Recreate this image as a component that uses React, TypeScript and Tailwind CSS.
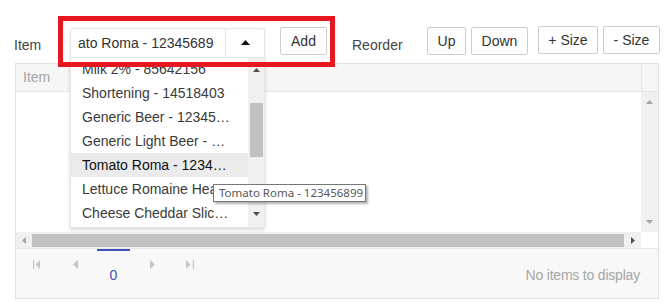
import React from "react";

const Tri = ({ dir, color, w = 8, h = 4 }: { dir: "up" | "down" | "left" | "right"; color: string; w?: number; h?: number }) => {
  let pts = "";
  let vw = w;
  let vh = h;
  if (dir === "up") pts = `0,${h} ${w},${h} ${w / 2},0`;
  if (dir === "down") pts = `0,0 ${w},0 ${w / 2},${h}`;
  if (dir === "left") {
    vw = h;
    vh = w;
    pts = `${h},0 ${h},${w} 0,${w / 2}`;
  }
  if (dir === "right") {
    vw = h;
    vh = w;
    pts = `0,0 0,${w} ${h},${w / 2}`;
  }
  return (
    <svg width={vw} height={vh} viewBox={`0 0 ${vw} ${vh}`} className="block">
      <polygon points={pts} fill={color} />
    </svg>
  );
};

const items = [
  "Milk 2% - 85642156",
  "Shortening - 14518403",
  "Generic Beer - 123456789",
  "Generic Light Beer - 123456788",
  "Tomato Roma - 123456899",
  "Lettuce Romaine Head - 12345678",
  "Cheese Cheddar Slice - 12345678",
];

const Btn = ({ children, className = "" }: { children: React.ReactNode; className?: string }) => (
  <div
    className={
      "h-[28px] flex items-center justify-center border border-[#cdcdcd] rounded-[2px] bg-white text-[14px] text-[#333] " +
      className
    }
  >
    {children}
  </div>
);

export default function App() {
  return (
    <div className="relative w-[667px] h-[307px] overflow-hidden bg-white font-['Liberation_Sans',Arial,sans-serif]">
      {/* toolbar */}
      <div className="flex items-start h-[63px] pt-[27px] pl-[14px]">
        <div className="w-[56px] mt-[8px] leading-[20px] text-[14px] text-[#444]">Item</div>
        <div className="relative w-[195px] h-[31px] mt-[1px] flex border border-[#e6e6e6] rounded-[2px] bg-white shadow-[0_1px_2px_rgba(0,0,0,0.12)]">
          <div className="flex-1 overflow-hidden whitespace-nowrap pl-[7px] leading-[29px] text-[14px] text-[#333]">
            ato Roma - 12345689
          </div>
          <div className="w-[39px] border-l border-[#e6e6e6] flex items-center justify-center pb-[3px]">
            <Tri dir="up" color="#111" w={9} h={5} />
          </div>
        </div>
        <Btn className="ml-[15px] w-[47px]">Add</Btn>
        <div className="ml-[25px] w-[75px] mt-[8px] leading-[20px] text-[14px] text-[#444]">Reorder</div>
        <Btn className="w-[39px]">Up</Btn>
        <Btn className="ml-[5px] w-[57px]">Down</Btn>
        <Btn className="ml-[10px] w-[60px] -mt-[1px]">+ Size</Btn>
        <Btn className="ml-[5px] w-[57px] -mt-[1px]">- Size</Btn>
      </div>

      {/* grid */}
      <div className="ml-[15px] w-[644px] h-[236px] border border-[#e0e0e0] flex flex-col">
        <div className="h-[28px] flex border-b border-[#e6e6e6] bg-[#f6f6f6]">
          <div className="flex-1 pl-[7px] leading-[27px] text-[14px] text-[#a4a4a4]">Item</div>
          <div className="w-[17px] border-l border-[#e6e6e6]" />
        </div>
        <div className="h-[140px] flex">
          <div className="flex-1 bg-white" />
          <div className="w-[17px] bg-[#f0f0f0] flex flex-col items-center justify-between pt-[8px] pb-[8px]">
            <Tri dir="up" color="#a3a3a3" w={7} h={4} />
            <Tri dir="down" color="#a3a3a3" w={7} h={4} />
          </div>
        </div>
        <div className="h-[16px] flex">
          <div className="flex-1 bg-[#f0f0f0] flex items-center">
            <div className="w-[16px] flex justify-center">
              <Tri dir="left" color="#a3a3a3" w={7} h={4} />
            </div>
            <div className="flex-1 h-[13px] bg-[#c1c1c1]" />
            <div className="w-[17px] flex justify-center">
              <Tri dir="right" color="#505050" w={7} h={4} />
            </div>
          </div>
          <div className="w-[17px] bg-white" />
        </div>
        <div className="flex-1 border-t border-[#e6e6e6] bg-[#f8f8f8] flex items-start pl-[2px]">
          <div className="w-[38px] pt-[11px] flex justify-center">
            <svg width="8" height="9" viewBox="0 0 8 9" className="block">
              <rect x="0" y="0" width="1.2" height="9" fill="#c6c6c6" />
              <polygon points="7,0 7,9 2.5,4.5" fill="#c6c6c6" />
            </svg>
          </div>
          <div className="w-[39px] pt-[11px] flex justify-center">
            <Tri dir="left" color="#c6c6c6" w={9} h={5} />
          </div>
          <div className="ml-[2px] w-[33px] h-[40px] border-t-2 border-[#3f51b5] pt-[16px] text-center leading-[16px] text-[14px] text-[#3f51b5]">
            0
          </div>
          <div className="ml-[3px] w-[38px] pt-[11px] flex justify-center">
            <Tri dir="right" color="#c6c6c6" w={9} h={5} />
          </div>
          <div className="w-[38px] pt-[11px] flex justify-center">
            <svg width="8" height="9" viewBox="0 0 8 9" className="block">
              <polygon points="0,0 0,9 4.5,4.5" fill="#c6c6c6" />
              <rect x="6.8" y="0" width="1.2" height="9" fill="#c6c6c6" />
            </svg>
          </div>
          <div className="ml-auto pr-[18px] pt-[18px] leading-[16px] text-[14px] text-[#a6a6a6] tracking-[-0.2px]">
            No items to display
          </div>
        </div>
      </div>

      {/* dropdown popup */}
      <div className="absolute left-[70px] top-[57px] w-[195px] h-[171px] border border-[#e6e6e6] bg-white shadow-[0_2px_4px_rgba(0,0,0,0.15)] flex z-10">
        <div className="flex-1 overflow-hidden">
          <div className="-mt-[1px]">
            {items.map((it, i) => (
              <div
                key={it}
                className={
                  "h-[24px] leading-[24px] pl-[11px] pr-[16px] text-[14px] whitespace-nowrap overflow-hidden text-ellipsis " +
                  (i === 4 ? "bg-[#ebebeb] text-[#111]" : "text-[#3a3a3a]")
                }
              >
                {it}
              </div>
            ))}
          </div>
        </div>
        <div className="w-[16px] bg-[#f0f0f0] flex flex-col items-center pt-[10px] pb-[11px]">
          <Tri dir="up" color="#505050" w={7} h={4} />
          <div className="mt-[31px] w-[13px] h-[54px] bg-[#c1c1c1]" />
          <div className="flex-1" />
          <Tri dir="down" color="#505050" w={7} h={4} />
        </div>
      </div>

      {/* red highlight annotation */}
      <div className="absolute left-[58px] top-[16px] w-[277px] h-[51px] border-[5px] border-[#e8161e] pointer-events-none z-20" />

      {/* tooltip */}
      <div className="absolute left-[213px] top-[184px] w-[153px] h-[18px] border border-[#767676] bg-white shadow-[2px_2px_2px_rgba(0,0,0,0.3)] z-30 pl-[5px] leading-[16px] text-[11.5px] text-[#575757] whitespace-nowrap font-['Noto_Sans',sans-serif]">
        Tomato Roma - 123456899
      </div>
    </div>
  );
}
